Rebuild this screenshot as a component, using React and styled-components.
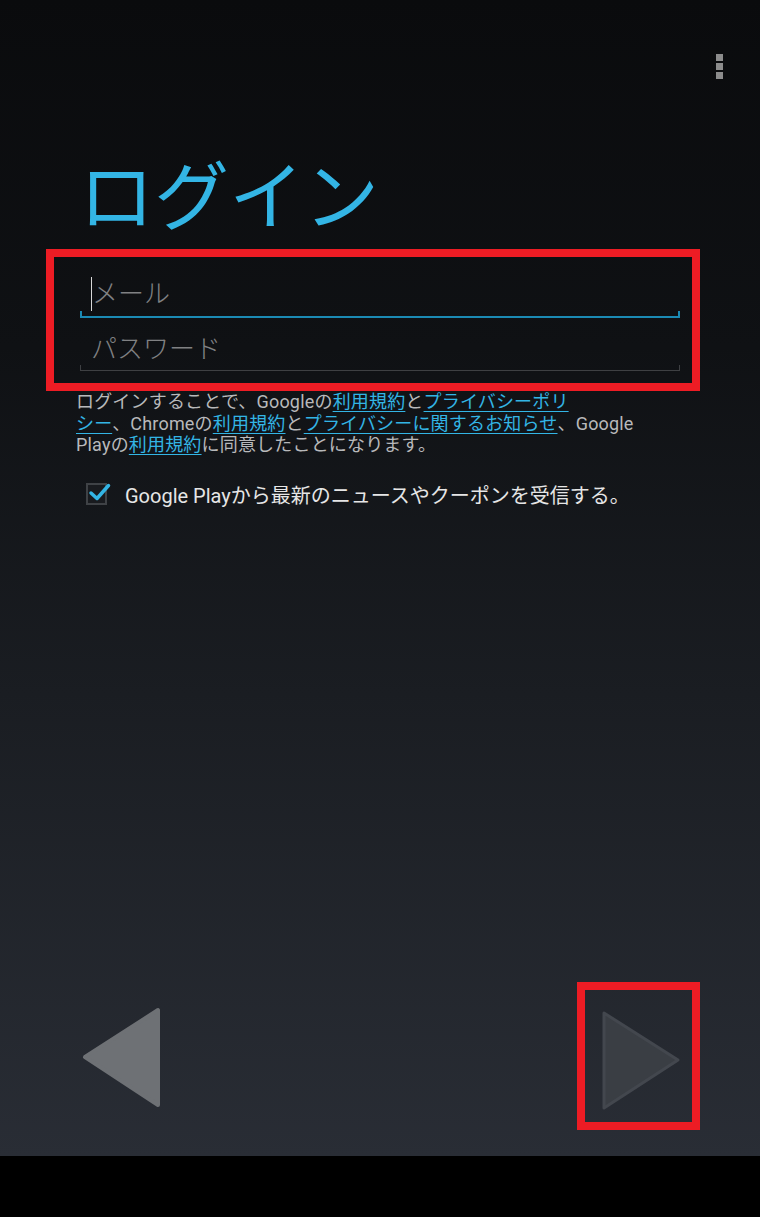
import React from "react";
import styled, { createGlobalStyle } from "styled-components";

const GlobalStyle = createGlobalStyle`
  html, body {
    margin: 0;
    padding: 0;
    background: #000;
  }
  body {
    font-family: Roboto, "Noto Sans CJK JP", sans-serif;
  }
`;

const Screen = styled.div`
  width: 760px;
  min-height: 1156px;
  display: flex;
  flex-direction: column;
  background: linear-gradient(180deg, #0a0b0d 0%, #0f1114 30%, #1a1d22 60%, #292d35 100%);
`;

const TopBar = styled.div`
  display: flex;
  justify-content: flex-end;
  padding: 54px 37px 0 0;
`;

const Overflow = styled.div`
  display: flex;
  flex-direction: column;
  gap: 2px;
  span {
    width: 7px;
    height: 7px;
    background: #8c8c8c;
  }
`;

const Title = styled.h1`
  margin: 73px 0 0 79px;
  font-family: "Noto Sans CJK JP", sans-serif;
  font-size: 75px;
  font-weight: 400;
  line-height: 80px;
  color: #33b5e5;
`;

const Frame = styled.div`
  border: 8px solid #ed1c24;
  box-sizing: border-box;
`;

const FormFrame = styled(Frame)`
  margin: 17px 0 0 46px;
  width: 654px;
  padding: 0 12px 12px 26px;
`;

const Field = styled.div`
  position: relative;
  height: ${(p) => p.$h}px;
  box-sizing: border-box;
  display: flex;
  align-items: flex-end;
  padding: 0 0 ${(p) => p.$pb}px 11px;
  border-bottom: ${(p) => (p.$active ? "2px solid #1b8ab4" : "1px solid #3e4043")};
  &::before,
  &::after {
    content: "";
    position: absolute;
    bottom: 0;
    width: ${(p) => (p.$active ? 2 : 1)}px;
    height: 5px;
    background: ${(p) => (p.$active ? "#1b8ab4" : "#3e4043")};
  }
  &::before {
    left: 0;
  }
  &::after {
    right: 0;
  }
`;

const Caret = styled.span`
  display: inline-block;
  width: 1px;
  height: 34px;
  background: #d8d8d8;
  align-self: flex-end;
  margin-bottom: -4px;
`;

const Placeholder = styled.span`
  font-family: Roboto, "Noto Sans CJK JP", sans-serif;
  font-size: 26px;
  line-height: 26px;
  color: #808183;
  font-weight: 300;
`;

const Legal = styled.p`
  margin: 0 0 0 76px;
  font-size: 18px;
  letter-spacing: 0.18px;
  line-height: 21.5px;
  color: #b8b9bb;
  white-space: nowrap;
  a {
    color: #33b5e5;
    text-decoration: underline;
    text-underline-offset: 3px;
  }
`;

const CheckRow = styled.label`
  display: flex;
  align-items: center;
  gap: 18px;
  margin: 24px 0 0 86px;
  font-size: 20px;
  color: #e6e6e6;
`;

const Box = styled.span`
  position: relative;
  width: 21px;
  height: 22px;
  box-sizing: border-box;
  border: 2px solid #3f4246;
  background: #191b1f;
  svg {
    position: absolute;
    left: -2px;
    top: -2px;
  }
`;

const Spacer = styled.div`
  flex: 1;
`;

const Nav = styled.div`
  display: flex;
  justify-content: space-between;
  align-items: flex-end;
  padding: 0 60px 26px 82px;
`;

const NavArrow = styled.div`
  display: flex;
  margin-bottom: ${(p) => p.$mb || 0}px;
`;

const NextFrame = styled(Frame)`
  width: 123px;
  height: 148px;
  padding: 20px 0 0 16px;
`;

const SystemBar = styled.div`
  height: 61px;
  background: #000;
`;

export default function App() {
  return (
    <>
      <GlobalStyle />
      <Screen>
        <TopBar>
          <Overflow>
            <span />
            <span />
            <span />
          </Overflow>
        </TopBar>
        <Title>ログイン</Title>
        <FormFrame>
          <Field $active $h={61} $pb={9}>
            <Caret />
            <Placeholder>メール</Placeholder>
          </Field>
          <Field $h={53} $pb={8}>
            <Placeholder>パスワード</Placeholder>
          </Field>
        </FormFrame>
        <Legal>
          ログインすることで、Googleの<a>利用規約</a>と<a>プライバシーポリ</a>
          <br />
          <a>シー</a>、Chromeの<a>利用規約</a>と<a>プライバシーに関するお知らせ</a>、Google
          <br />
          Playの<a>利用規約</a>に同意したことになります。
        </Legal>
        <CheckRow>
          <Box>
            <svg width="28" height="28" viewBox="0 0 28 28">
              <path
                d="M5 10 L11 15.5 L22.5 2.5"
                fill="none"
                stroke="#33b5e5"
                strokeWidth="3.5"
                strokeLinecap="round"
                strokeLinejoin="round"
              />
            </svg>
          </Box>
          Google Playから最新のニュースやクーポンを受信する。
        </CheckRow>
        <Spacer />
        <Nav>
          <NavArrow $mb={21}>
            <svg width="80" height="102" viewBox="0 0 80 102">
              <polygon
                points="3,50 76,3 76,98"
                fill="#6e7175"
                stroke="#6e7175"
                strokeWidth="4"
                strokeLinejoin="round"
              />
            </svg>
          </NavArrow>
          <NextFrame>
            <svg width="80" height="102" viewBox="0 0 80 102">
              <polygon
                points="3,3 3,98 77,50"
                fill="#3a3e44"
                stroke="#43474e"
                strokeWidth="3"
                strokeLinejoin="round"
              />
            </svg>
          </NextFrame>
        </Nav>
      </Screen>
      <SystemBar />
    </>
  );
}
